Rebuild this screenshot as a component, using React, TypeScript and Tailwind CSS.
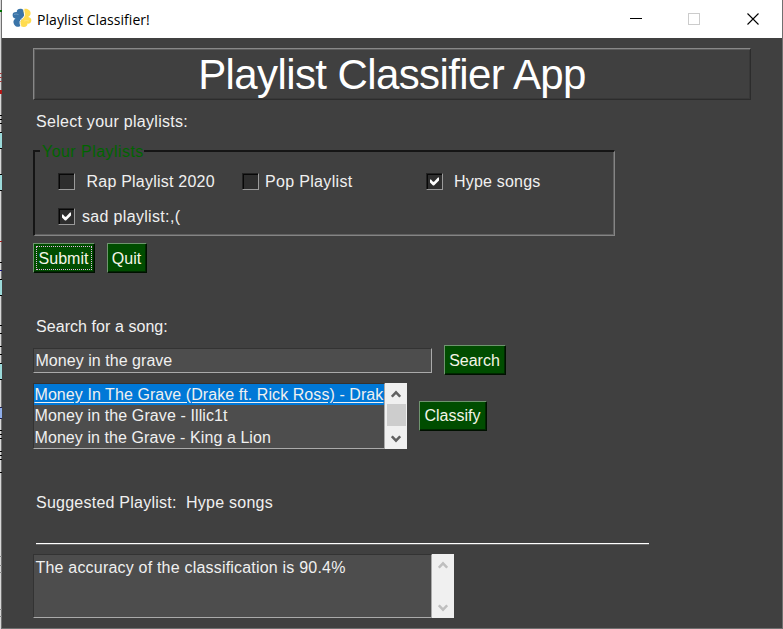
import type { ReactNode } from "react";

function Label({ children, className = "" }: { children: ReactNode; className?: string }) {
  return <span className={`block whitespace-pre text-[16px] leading-[22px] text-[#f0f0f0] ${className}`}>{children}</span>;
}

function Button({ children, focused = false, className = "" }: { children: ReactNode; focused?: boolean; className?: string }) {
  return (
    <button
      className={`relative flex h-[30px] shrink-0 items-center justify-center border border-b-[#001000] border-l-[#6f946f] border-r-[#001000] border-t-[#6f946f] bg-[#004d00] text-[16px] text-[#f5f5e8] shadow-[inset_-1px_-1px_0_#002800] ${className}`}
    >
      {focused && <span className="absolute inset-[2px] border border-dotted border-[#e5b5e5]" />}
      <span className="whitespace-pre pr-px pt-px">{children}</span>
    </button>
  );
}

function Check({ checked = false }: { checked?: boolean }) {
  return (
    <span className="block h-[17px] w-[17px] shrink-0 border border-b-[#9a9a9a] border-l-[#222] border-r-[#9a9a9a] border-t-[#222] bg-[#2e2e2e] shadow-[inset_1px_1px_0_#080808]">
      {checked && (
        <svg viewBox="0 0 15 15" className="h-[15px] w-[15px]">
          <path d="M3 5.5v3l3 3h1l5-5V3.5h-1L7 7.8H6L4 5.5Z" fill="#fff" />
        </svg>
      )}
    </span>
  );
}

function Chevron({ down = false, color }: { down?: boolean; color: string }) {
  return (
    <svg viewBox="0 0 10 8" className="h-[8px] w-[10px]">
      <path d={down ? "M.8 1.3L5 5.6L9.2 1.3" : "M.8 6.7L5 2.4L9.2 6.7"} fill="none" stroke={color} strokeWidth="2.6" />
    </svg>
  );
}

const edgeMarks = [
  ["top-[10px] h-[2px]", "bg-[#007000]"],
  ["top-[73px] h-px", "bg-[#a04040]"],
  ["top-[77px] h-px", "bg-[#a04040]"],
  ["top-[81px] h-px", "bg-[#a04040]"],
  ["top-[90px] h-[4px]", "bg-[#b01818]"],
  ["top-[115px] h-px", "bg-black"],
  ["top-[119px] h-px", "bg-black"],
  ["top-[123px] h-px", "bg-black"],
  ["top-[132px] h-[17px]", "border-y border-black bg-[#9bdada]"],
  ["top-[174px] h-[17px]", "border-y border-black bg-[#9bdada]"],
  ["top-[241px] h-px", "bg-[#a01818]"],
  ["top-[262px] h-px", "bg-black"],
  ["top-[270px] h-px", "bg-[#101080]"],
  ["top-[279px] h-[17px]", "border-y border-black bg-[#9bdada]"],
  ["top-[325px] h-px", "bg-black"],
  ["top-[333px] h-px", "bg-black"],
  ["top-[346px] h-px", "bg-black"],
  ["top-[354px] h-px", "bg-black"],
  ["top-[363px] h-[17px]", "border-y border-black bg-[#9bdada]"],
  ["top-[407px] h-[12px]", "border-y border-[#202050] bg-[#8faeea]"],
  ["top-[430px] h-px", "bg-black"],
  ["top-[434px] h-px", "bg-black"],
  ["top-[438px] h-px", "bg-black"],
  ["top-[451px] h-px", "bg-black"],
  ["top-[455px] h-px", "bg-black"],
  ["top-[459px] h-px", "bg-black"],
  ["top-[472px] h-px", "bg-black"],
  ["top-[556px] h-px", "bg-[#888]"],
  ["top-[565px] h-px", "bg-[#888]"],
  ["top-[572px] h-px", "bg-[#888]"],
  ["top-[609px] h-px", "bg-[#888]"],
  ["top-[616px] h-px", "bg-[#888]"],
];

export default function App() {
  return (
    <div className="relative flex h-[629px] w-[783px] overflow-hidden bg-[#d8d8d8] font-['Liberation_Sans',Arial,sans-serif]">
      {edgeMarks.map(([place, paint]) => (
        <span key={place} className={`absolute left-0 w-[2px] ${place} ${paint}`} />
      ))}
      <div className="ml-px flex w-[782px] flex-col border-b border-l border-r border-[#707070] bg-[#404040]">
        <header className="flex h-[38px] shrink-0 items-center bg-white pl-[10px] text-black">
          <svg viewBox="0 0 20 20" className="mb-[2px] h-[20px] w-[20px]">
            <path d="M9 0.7C6 .5 4.5 1.8 4.8 4C2 3.8.5 5 .6 7.2C.8 9.6 2 10.3 3.5 10.6C1.2 12 1 14 2 16.2C3.3 19 7 19.7 8.8 17.5C10 16 9.6 14 9.7 12C9.8 10 12 9.5 12.3 7.4C12.8 3.8 12 1 9 .7Z" fill="#3a74a8" />
            <path d="M12 1C15 .3 18.5 2 18.6 5C18.7 7.2 17.5 8.2 16.2 9C18.4 9.3 19.5 10.6 19.3 12.7C19.1 15 17.5 15.8 15.5 15.6C15.6 18 14 19.2 11.5 19C8.5 18.8 7.5 16.5 8 14C8.5 11.5 11.2 11.2 12 9C12.8 6.5 10.5 3 12 1Z" fill="#ffdc50" />
            <path d="M12 .8Q11.6 2.5 12.4 4.5Q13.2 7.5 11.6 9.4Q8.5 11 8 13.5Q8 16 8.8 18" fill="none" stroke="#fff" strokeWidth=".9" />
            <path d="M2 6.5Q4 5.5 6.5 6.5M12 13Q14 12 17 13" fill="none" stroke="#fff" strokeWidth=".5" opacity=".5" />
          </svg>
          <span className="ml-[5px] whitespace-pre font-['Open_Sans','Noto_Sans',sans-serif] text-[14px] tracking-[0.06px]">Playlist Classifier!</span>
          <div className="ml-auto mr-[23px] flex items-center gap-[46px]">
            <svg className="h-3 w-3" viewBox="0 0 12 12" shapeRendering="crispEdges"><path d="M0 5.5H12" stroke="#000" /></svg>
            <span className="h-3 w-3 border border-[#ccc]" />
            <svg className="ml-px h-3 w-3" viewBox="0 0 12 12"><path d="M.5.5l11 11m0-11l-11 11" stroke="#000" strokeWidth="1.1" /></svg>
          </div>
        </header>
        <main className="flex flex-col items-start pl-[31px] pt-[10px]">
          <h1 className="flex h-[52px] w-[718px] items-center justify-center border border-b-[#2c2c2c] border-l-[#888] border-r-[#2c2c2c] border-t-[#888] text-[42px] leading-none text-white shadow-[inset_1px_1px_0_#5c5c5c,inset_-1px_-1px_0_#383838]">
            <span className="whitespace-pre pt-px tracking-[-0.6px]">Playlist Classifier App</span>
          </h1>
          <Label className="ml-[3px] mt-[11px] tracking-[0.28px]">Select your playlists:</Label>
          <fieldset className="relative mt-[17px] flex h-[86px] w-[582px] flex-col border-b border-l-2 border-r border-t-2 border-b-[#858585] border-l-[#151515] border-r-[#858585] border-t-[#151515] pl-[23px] pt-[18px] shadow-[inset_-1px_-1px_0_#606060]">
            <span className="absolute left-[5px] top-[-10px] h-[20px] whitespace-pre bg-[#404040] pl-[2px] text-[16px] leading-[20px] tracking-[0.45px] text-[#006400]">Your Playlists</span>
            <div className="flex h-[22px] items-center">
              <Check /><Label className="ml-[11.5px] w-[155.5px] pt-px tracking-[0.22px]">Rap Playlist 2020</Label>
              <Check /><Label className="ml-[6px] w-[161px] pt-px tracking-[0.33px]">Pop Playlist</Label>
              <Check checked /><Label className="ml-[11px] pt-px tracking-[0.2px]">Hype songs</Label>
            </div>
            <div className="mt-[13px] flex h-[22px] items-center">
              <Check checked /><Label className="ml-[7px] pt-px tracking-[0.33px]">sad playlist:,(</Label>
            </div>
          </fieldset>
          <div className="mt-[7px] flex gap-[12px]">
            <Button focused className="w-[62px]">Submit</Button>
            <Button className="w-[40px]">Quit</Button>
          </div>
          <Label className="ml-[3px] mt-[43px] tracking-[0.06px]">Search for a song:</Label>
          <div className="mt-[7px] flex items-start gap-[12px]">
            <div className="mt-[3px] flex h-[25px] w-[399px] items-center border border-b-[#aaa] border-l-[#333] border-r-[#aaa] border-t-[#333] bg-[#4d4d4d] pl-[1.5px]">
              <Label className="pt-px tracking-[0.04px]">Money in the grave</Label>
            </div>
            <Button className="w-[62px]">Search</Button>
          </div>
          <div className="mt-[8px] flex items-center gap-[12px]">
            <div className="flex h-[66px] w-[374px]">
              <div className="w-[352px] overflow-hidden border border-b-[#aaa] border-l-[#333] border-r-[#aaa] border-t-[#333] bg-[#4d4d4d]">
                <Label className="h-[21px] bg-[#0078d7] pl-[0.5px] tracking-[0.07px] underline underline-offset-[2px]">Money In The Grave (Drake ft. Rick Ross) - Drak</Label>
                <Label className="h-[22px] pl-[0.5px] tracking-[0.1px]">Money in the Grave - Illic1t</Label>
                <Label className="h-[22px] pl-[0.5px] tracking-[0.08px]">Money in the Grave - King a Lion</Label>
              </div>
              <div className="flex w-[22px] flex-col items-center bg-[#f0f0f0]">
                <span className="flex h-[21px] items-center"><Chevron color="#606060" /></span>
                <span className="h-[22px] w-[19px] bg-[#cdcdcd]" />
                <span className="flex h-[23px] items-center pt-[2px]"><Chevron down color="#606060" /></span>
              </div>
            </div>
            <Button className="mb-px w-[68px]">Classify</Button>
          </div>
          <Label className="ml-[3px] mt-[43px] tracking-[0.24px]">Suggested Playlist:  Hype songs</Label>
          <div className="ml-[3px] mt-[29px] h-px w-[613px] bg-white shadow-[0_1px_0_#686868]" />
          <div className="mt-[10px] flex h-[64px] w-[421px]">
            <div className="w-[399px] border border-b-[#aaa] border-l-[#333] border-r-[#aaa] border-t-[#333] bg-[#4d4d4d] pl-[1.5px] pt-[2px]">
              <Label className="tracking-[0.2px]">The accuracy of the classification is 90.4%</Label>
            </div>
            <div className="flex w-[22px] flex-col items-center justify-between bg-[#f0f0f0] pb-[6px] pt-[7px]">
              <Chevron color="#bfbfbf" />
              <Chevron down color="#bfbfbf" />
            </div>
          </div>
        </main>
      </div>
    </div>
  );
}
